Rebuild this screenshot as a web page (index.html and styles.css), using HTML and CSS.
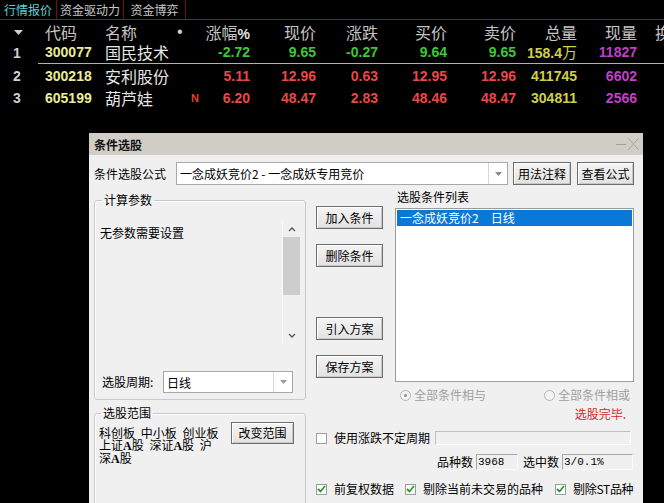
FILE: index.html
```html
<!DOCTYPE html>
<html>
<head>
<meta charset="utf-8">
<link rel="stylesheet" href="styles.css">
</head>
<body>
<div class="quote">
  <div class="tabs">
    <div class="tab tab-active">行情报价</div>
    <div class="tab tab-2">资金驱动力</div>
    <div class="tab tab-3">资金博弈</div>
  </div>
  <div class="row head">
    <div class="c-num"><svg class="sort" width="9" height="5" viewBox="0 0 9 5"><path d="M0 0H9L4.5 5Z" fill="#d0d0d0"/></svg></div>
    <div class="c-code">代码</div>
    <div class="c-name">名称</div>
    <div class="c-mark dot">•</div>
    <div class="c-r">涨幅<b>%</b></div>
    <div class="c-r">现价</div>
    <div class="c-r">涨跌</div>
    <div class="c-r">买价</div>
    <div class="c-r">卖价</div>
    <div class="c-r">总量</div>
    <div class="c-r">现量</div>
    <div class="c-last">换</div>
  </div>
  <div class="row data first">
    <div class="c-num">1</div>
    <div class="c-code">300077</div>
    <div class="c-name">国民技术</div>
    <div class="c-mark"></div>
    <div class="c-r green">-2.72</div>
    <div class="c-r green">9.65</div>
    <div class="c-r green">-0.27</div>
    <div class="c-r green">9.64</div>
    <div class="c-r green">9.65</div>
    <div class="c-r vol">158.4<span class="wan">万</span></div>
    <div class="c-r cur">11827</div>
    <div class="c-last"></div>
  </div>
  <div class="row data">
    <div class="c-num">2</div>
    <div class="c-code">300218</div>
    <div class="c-name">安利股份</div>
    <div class="c-mark"></div>
    <div class="c-r red">5.11</div>
    <div class="c-r red">12.96</div>
    <div class="c-r red">0.63</div>
    <div class="c-r red">12.95</div>
    <div class="c-r red">12.96</div>
    <div class="c-r vol">411745</div>
    <div class="c-r cur">6602</div>
    <div class="c-last"></div>
  </div>
  <div class="row data">
    <div class="c-num">3</div>
    <div class="c-code">605199</div>
    <div class="c-name">葫芦娃</div>
    <div class="c-mark n">N</div>
    <div class="c-r red">6.20</div>
    <div class="c-r red">48.47</div>
    <div class="c-r red">2.83</div>
    <div class="c-r red">48.46</div>
    <div class="c-r red">48.47</div>
    <div class="c-r vol">304811</div>
    <div class="c-r cur">2566</div>
    <div class="c-last"></div>
  </div>
</div>

<div class="dialog">
  <div class="titlebar">
    <span class="title">条件选股</span>
    <svg class="winctl" width="24" height="14" viewBox="0 0 24 14">
      <path d="M0 7.5H10" stroke="#a0a0a0" stroke-width="1"/>
      <path d="M12 1L23 13M23 1L12 13" stroke="#a8a8a8" stroke-width="1"/>
    </svg>
  </div>
  <div class="dlg-body">
    <div class="formula-row">
      <span class="lbl formula-lbl">条件选股公式</span>
      <div class="combo formula-combo">
        <span class="combo-text">一念成妖竞价2 - 一念成妖专用竞价</span>
        <span class="combo-btn"><svg width="7" height="4" viewBox="0 0 7 4"><path d="M0 0H7L3.5 4Z" fill="#888"/></svg></span>
      </div>
      <button class="btn top-btn">用法注释</button>
      <button class="btn top-btn">查看公式</button>
    </div>
    <div class="main">
      <div class="left-col">
        <fieldset class="group g-param">
          <legend>计算参数</legend>
          <div class="param-area">
            <span class="no-param">无参数需要设置</span>
            <div class="vscroll">
              <svg class="chev" width="8" height="5" viewBox="0 0 8 5"><path d="M1 4L4 1L7 4" stroke="#555" stroke-width="1.3" fill="none"/></svg>
              <div class="thumb"></div>
              <div class="track"></div>
              <svg class="chev" width="8" height="5" viewBox="0 0 8 5"><path d="M1 1L4 4L7 1" stroke="#555" stroke-width="1.3" fill="none"/></svg>
            </div>
          </div>
          <div class="period-row">
            <span class="lbl period-lbl">选股周期:</span>
            <div class="combo period-combo">
              <span class="combo-text">日线</span>
              <span class="combo-btn"><svg width="7" height="4" viewBox="0 0 7 4"><path d="M0 0H7L3.5 4Z" fill="#999"/></svg></span>
            </div>
          </div>
        </fieldset>
        <fieldset class="group g-range">
          <legend>选股范围</legend>
          <div class="range-area">
            <p class="range-text">科创板 中小板 创业板<br>上证<span class="serif-a">A</span>股 深证<span class="serif-a">A</span>股 沪<br>深<span class="serif-a">A</span>股</p>
            <button class="btn range-btn">改变范围</button>
          </div>
        </fieldset>
      </div>
      <div class="right-col">
        <div class="cond-area">
          <div class="btn-col">
            <button class="btn side-btn b1">加入条件</button>
            <button class="btn side-btn b2">删除条件</button>
            <button class="btn side-btn b3">引入方案</button>
            <button class="btn side-btn b4">保存方案</button>
          </div>
          <div class="list-col">
            <div class="lbl list-lbl">选股条件列表</div>
            <div class="listbox">
              <div class="list-item sel">一念成妖竞价2　日线</div>
            </div>
          </div>
        </div>
        <div class="radio-row">
          <label class="radio-opt"><span class="radio on"></span>全部条件相与</label>
          <label class="radio-opt"><span class="radio"></span>全部条件相或</label>
        </div>
        <div class="status">选股完毕.</div>
        <div class="period-check">
          <span class="cbox"></span>
          <span class="lbl cb-text">使用涨跌不定周期</span>
          <div class="progress"></div>
        </div>
        <div class="counts">
          <span class="lbl">品种数</span>
          <span class="field f1">3968</span>
          <span class="lbl cnt2">选中数</span>
          <span class="field f2">3/0.1%</span>
        </div>
        <div class="bottom-checks">
          <span class="cbox checked"><svg width="9" height="8" viewBox="0 0 9 8"><path d="M1 4L3.5 6.5L8 1" stroke="#2a9a2a" stroke-width="1.8" fill="none"/></svg></span>
          <span class="lbl cb-text">前复权数据</span>
          <span class="cbox checked cb2"><svg width="9" height="8" viewBox="0 0 9 8"><path d="M1 4L3.5 6.5L8 1" stroke="#2a9a2a" stroke-width="1.8" fill="none"/></svg></span>
          <span class="lbl cb-text">剔除当前未交易的品种</span>
          <span class="cbox checked cb3"><svg width="9" height="8" viewBox="0 0 9 8"><path d="M1 4L3.5 6.5L8 1" stroke="#2a9a2a" stroke-width="1.8" fill="none"/></svg></span>
          <span class="lbl cb-text st">剔除ST品种</span>
        </div>
      </div>
    </div>
  </div>
</div>
</body>
</html>
```
FILE: styles.css
```css
html, body {
  margin: 0;
  padding: 0;
  background: #000;
  width: 664px;
  height: 503px;
  overflow: hidden;
}
body {
  position: relative;
  font-family: "Noto Sans CJK SC", "Liberation Sans", sans-serif;
}

/* ---------- quote table ---------- */
.quote {
  background: #000;
}
.tabs {
  display: flex;
  height: 19px;
  border-bottom: 1px solid #a01010;
}
.tab {
  font-size: 12px;
  line-height: 19px;
  color: #c8c8c8;
  text-align: center;
  border-right: 1px solid #701010;
}
.tab-active {
  width: 56px;
  color: #5fd0d0;
}
.tab-2 { width: 66px; }
.tab-3 { width: 61px; }

.row {
  display: grid;
  grid-template-columns: 38px 62px 60px 40px 50px 66px 62px 69px 69px 61px 60px 1fr;
  align-items: center;
  white-space: nowrap;
}
.head {
  height: 21px;
  font-size: 16px;
  color: #c4c4c4;
}
.head b {
  font-family: "Liberation Sans", sans-serif;
  font-size: 14px;
  color: #e0e0e0;
}
.data {
  height: 22px;
}
.data.first > div:not(.c-num) {
  border-bottom: 1px solid #b8b878;
  height: 22px;
  line-height: 22px;
}
.data.first {
  height: 23px;
}
.c-num {
  padding-left: 13px;
  font-family: "Liberation Sans", sans-serif;
  font-size: 14px;
  font-weight: bold;
  color: #d0d0d0;
}
.head .c-num {
  padding-left: 14px;
}
.sort {
  display: block;
  margin-top: 1px;
}
.c-code {
  padding-left: 7px;
}
.data .c-code {
  font-family: "Liberation Sans", sans-serif;
  font-size: 14px;
  font-weight: bold;
  color: #ecec9c;
}
.c-name {
  padding-left: 5px;
}
.data .c-name {
  font-size: 16px;
  color: #e6e6e6;
}
.dot {
  padding-left: 17px;
  font-family: "Liberation Sans", sans-serif;
  color: #d0d0d0;
}
.n {
  padding-left: 31px;
  font-family: "Liberation Sans", sans-serif;
  font-size: 11px;
  font-weight: bold;
  color: #e04030;
}
.c-r {
  text-align: right;
}
.data .c-r {
  font-family: "Liberation Sans", sans-serif;
  font-size: 14px;
  font-weight: bold;
}
.c-last {
  padding-left: 18px;
  overflow: hidden;
}
.green { color: #3cc83c; }
.red { color: #e84848; }
.vol { color: #d0d048; }
.cur { color: #c040c8; }
.wan {
  font-family: "Noto Sans CJK SC", sans-serif;
  font-weight: normal;
  font-size: 15px;
}

/* ---------- dialog ---------- */
.dialog {
  position: absolute;
  left: 89px;
  top: 133px;
  width: 554px;
  height: 380px;
  background: #f0f0f0;
  font-size: 12px;
  color: #000;
}
.titlebar {
  height: 22px;
  background: #d0cdc6;
  display: flex;
  align-items: center;
  justify-content: space-between;
  padding: 0 3px 0 5px;
}
.title {
  font-size: 12px;
  font-weight: bold;
  color: #111;
}
.winctl {
  display: block;
}
.dlg-body {
  padding: 7px 9px 0 5px;
}
.lbl {
  font-size: 12px;
  line-height: 14px;
  white-space: nowrap;
}
.formula-row {
  display: flex;
  align-items: center;
  height: 23px;
}
.formula-lbl {
  width: 82px;
}
.combo {
  display: flex;
  align-items: stretch;
  background: #fff;
  border: 1px solid #a8a8a8;
  box-sizing: border-box;
}
.combo-text {
  flex: 1;
  display: flex;
  align-items: center;
  padding-left: 3px;
  white-space: nowrap;
  overflow: hidden;
}
.combo-btn {
  width: 18px;
  display: flex;
  align-items: center;
  justify-content: center;
  border-left: 1px solid #d8d8d8;
}
.formula-combo {
  width: 332px;
  height: 23px;
}
.btn {
  font-family: "Noto Sans CJK SC", sans-serif;
  font-size: 12px;
  line-height: 14px;
  padding: 0;
  background: linear-gradient(#f4f4f4, #e2e2e2);
  border: 1px solid #6e6e6e;
  box-shadow: inset 1px 1px 0 #fff, inset -1px -1px 0 #c8c8c8;
  color: #000;
  box-sizing: border-box;
}
.top-btn {
  height: 23px;
  width: 58px;
  margin-left: 5px;
}
.top-btn + .top-btn {
  width: 57px;
  margin-left: 6px;
}

.main {
  display: flex;
  gap: 10px;
}
.left-col {
  width: 212px;
  display: flex;
  flex-direction: column;
}
.group {
  margin: 0;
  border: 1px solid #c8c8c8;
  border-radius: 3px;
  box-shadow: inset 1px 1px 0 #fff;
  padding: 0 5px 6px 5px;
  min-width: 0;
}
.group legend {
  font-size: 12px;
  line-height: 14px;
  padding: 0 2px;
  margin-left: 2px;
}
.g-param {
  margin-top: 8px;
  height: 207px;
  box-sizing: border-box;
}
.param-area {
  display: flex;
  justify-content: space-between;
  align-items: flex-start;
}
.no-param {
  margin-top: 19px;
  line-height: 14px;
}
.vscroll {
  margin-top: 15px;
  width: 17px;
  height: 121px;
  display: flex;
  flex-direction: column;
  align-items: center;
  background: #f0f0f0;
  border-left: 1px solid #fafafa;
}
.chev {
  display: block;
  margin: 5px 0;
}
.thumb {
  width: 17px;
  height: 58px;
  background: #cdcdcd;
}
.track {
  flex: 1;
}
.period-row {
  display: flex;
  align-items: center;
  margin-top: 28px;
  padding-left: 2px;
}
.period-lbl {
  width: 61px;
}
.period-combo {
  width: 130px;
  height: 22px;
}

.g-range {
  margin-top: 6px;
  height: 120px;
  box-sizing: border-box;
  padding-left: 4px;
}
.range-area {
  display: flex;
  align-items: flex-start;
}
.range-text {
  margin: 7px 0 0 0;
  width: 125px;
  font-size: 12px;
  line-height: 12px;
  word-spacing: 3px;
  white-space: nowrap;
}
.serif-a {
  font-family: "Liberation Serif", serif;
  font-weight: bold;
}
.range-btn {
  margin-left: 7px;
  margin-top: 2px;
  width: 63px;
  height: 22px;
}

.right-col {
  width: 318px;
  display: flex;
  flex-direction: column;
}
.cond-area {
  display: flex;
  gap: 12px;
}
.btn-col {
  width: 67px;
  display: flex;
  flex-direction: column;
}
.side-btn {
  width: 67px;
  height: 23px;
}
.b1 { margin-top: 21px; }
.b2 { margin-top: 15px; }
.b3 { margin-top: 50px; }
.b4 { margin-top: 15px; }
.list-col {
  width: 239px;
  display: flex;
  flex-direction: column;
}
.list-lbl {
  margin-top: 5px;
  padding-left: 2px;
}
.listbox {
  margin-top: 4px;
  height: 174px;
  background: #fff;
  border: 1px solid #9a9a9a;
  box-sizing: border-box;
  padding: 1px;
}
.list-item {
  height: 16px;
  line-height: 16px;
  padding-left: 3px;
}
.sel {
  background: #0a78d6;
  color: #fff;
}

.radio-row {
  margin-top: 6px;
  display: flex;
  justify-content: space-between;
  padding: 0 4px 0 84px;
  height: 14px;
}
.radio-opt {
  display: flex;
  align-items: center;
  color: #a0a0a0;
  font-size: 12px;
  line-height: 14px;
}
.radio {
  width: 9px;
  height: 9px;
  border: 1px solid #b4b4b4;
  border-radius: 50%;
  margin-right: 3px;
  position: relative;
  background: #f4f4f4;
}
.radio.on::after {
  content: "";
  position: absolute;
  left: 3px;
  top: 3px;
  width: 3px;
  height: 3px;
  border-radius: 50%;
  background: #909090;
}
.status {
  margin-top: 5px;
  text-align: right;
  padding-right: 8px;
  color: #d02828;
  font-size: 12px;
  line-height: 14px;
}
.period-check {
  margin-top: 10px;
  display: flex;
  align-items: center;
  height: 14px;
}
.cbox {
  width: 11px;
  height: 11px;
  border: 1px solid #9c9c9c;
  background: #fff;
  box-sizing: border-box;
  display: flex;
  align-items: center;
  justify-content: center;
  flex: none;
}
.cb-text {
  margin-left: 7px;
}
.st {
  letter-spacing: -0.3px;
}
.progress {
  margin-left: 5px;
  width: 196px;
  height: 14px;
  border: 1px solid #c0c0c0;
  border-right-color: #fff;
  border-bottom-color: #fff;
  box-sizing: border-box;
  background: #f0f0f0;
}
.counts {
  margin-top: 9px;
  display: flex;
  align-items: center;
  justify-content: flex-end;
  padding-right: 1px;
  height: 16px;
}
.field {
  height: 16px;
  box-sizing: border-box;
  border: 1px solid #a8a8a8;
  border-right-color: #fafafa;
  border-bottom-color: #fafafa;
  font-family: "Liberation Mono", monospace;
  font-size: 11px;
  line-height: 14px;
  padding-left: 1px;
  margin-left: 3px;
}
.f1 { width: 42px; }
.f2 { width: 71px; }
.cnt2 { margin-left: 5px; }
.bottom-checks {
  margin-top: 12px;
  display: flex;
  align-items: center;
  height: 14px;
}
.cb2 { margin-left: 11px; }
.cb3 { margin-left: 12px; }
```
